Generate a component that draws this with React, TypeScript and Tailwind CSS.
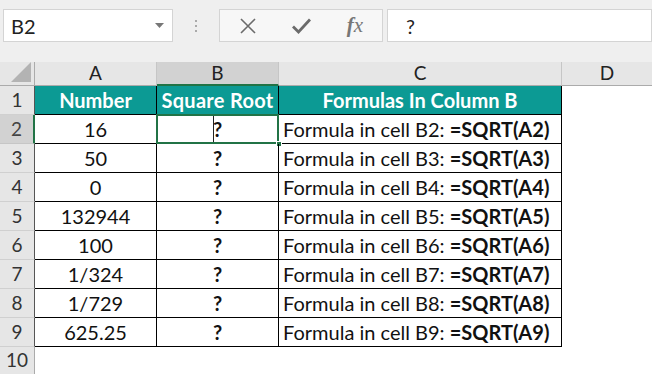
import React from "react";

const rows: [string, string][] = [
  ["16", "B2"],
  ["50", "B3"],
  ["0", "B4"],
  ["132944", "B5"],
  ["100", "B6"],
  ["1/324", "B7"],
  ["1/729", "B8"],
  ["625.25", "B9"],
];

const font = { fontFamily: "Lato, 'Open Sans', sans-serif" };

export default function App() {
  return (
    <div className="w-[652px] h-[374px] overflow-hidden bg-white text-[#1a1a1a]" style={font}>
      {/* Toolbar */}
      <div className="h-[62px] bg-[#efefef] flex items-start pt-[9px]">
        <div className="ml-[3px] w-[170px] h-[33px] bg-white border border-[#d4d4d4] flex items-center justify-between pl-[7px] pr-[8px]">
          <span className="text-[20px] text-[#222]">B2</span>
          <svg width="9" height="5" viewBox="0 0 9 5">
            <path d="M0 0 L9 0 L4.5 5 Z" fill="#777" />
          </svg>
        </div>
        <div className="w-[46px] h-[33px] flex flex-col items-center justify-center gap-[3px]">
          <div className="w-[2px] h-[2px] bg-[#aaa]" />
          <div className="w-[2px] h-[2px] bg-[#aaa]" />
          <div className="w-[2px] h-[2px] bg-[#aaa]" />
        </div>
        <div className="w-[164px] h-[33px] bg-[#f7f7f7] border border-[#d4d4d4] flex items-center">
          <div className="w-[54px] flex justify-center pl-[2px]">
            <svg width="16" height="16" viewBox="0 0 16 16">
              <path d="M1 1 L15 15 M15 1 L1 15" stroke="#6b6b6b" strokeWidth="1.6" />
            </svg>
          </div>
          <div className="w-[54px] flex justify-center">
            <svg width="19" height="16" viewBox="0 0 19 16">
              <path d="M1 8.5 L6.5 14 L18 1.5" stroke="#6b6b6b" strokeWidth="2.8" fill="none" />
            </svg>
          </div>
          <div className="w-[54px] flex justify-center">
            <span className="text-[21px] italic text-[#777]" style={{ fontFamily: "'Liberation Serif', serif" }}>
              <b className="font-bold">f</b>x
            </span>
          </div>
        </div>
        <div className="ml-[4px] flex-1 h-[33px] bg-white border border-[#d4d4d4] flex items-center pl-[18px]">
          <span className="text-[20px] text-[#222]">?</span>
        </div>
      </div>

      {/* Grid */}
      <div className="grid grid-cols-[35px_122px_122px_283px_90px] grid-rows-[24px_repeat(9,29px)_27px]">
        {/* column headers */}
        <div className="bg-[#e6e6e6] border-r border-b border-[#ababab] relative">
          <svg className="absolute right-[3px] bottom-[3px]" width="20" height="20" viewBox="0 0 20 20">
            <path d="M20 0 L20 20 L0 20 Z" fill="#b3b3b3" />
          </svg>
        </div>
        <div className="bg-[#e6e6e6] border-r border-b border-[#c6c6c6] border-b-[#ababab] flex items-center justify-center text-[19px] text-[#222]">A</div>
        <div className="bg-[#d2d2d2] border-r border-[#c6c6c6] border-b-2 border-b-[#217346] flex items-center justify-center text-[19px] text-[#222]">B</div>
        <div className="bg-[#e6e6e6] border-r border-b border-[#c6c6c6] border-b-[#ababab] flex items-center justify-center text-[19px] text-[#222]">C</div>
        <div className="bg-[#e6e6e6] border-b border-[#ababab] flex items-center justify-center text-[19px] text-[#222]">D</div>

        {/* row 1 */}
        <div className="bg-[#e6e6e6] border-r border-b border-r-[#555] border-b-[#d0d0d0] flex items-center justify-center text-[19px] text-[#333]">1</div>
        <div className="bg-[#0c9a94] border-r border-b border-black flex items-center justify-center text-[20px] font-bold text-white">Number</div>
        <div className="bg-[#0c9a94] border-r border-b border-black flex items-center justify-center text-[20px] font-bold text-white tracking-[0.3px]">Square Root</div>
        <div className="bg-[#0c9a94] border-r border-b border-black flex items-center justify-center text-[20px] font-bold text-white">Formulas In Column B</div>
        <div className="bg-white" />

        {rows.map(([a, ref], i) => {
          const n = i + 2;
          const sel = n === 2;
          return (
            <React.Fragment key={ref}>
              <div
                className={
                  sel
                    ? "bg-[#d2d2d2] border-r-2 border-b border-r-[#217346] border-b-[#c6c6c6] flex items-center justify-center text-[19px] text-[#444]"
                    : "bg-[#e6e6e6] border-r border-b border-r-[#555] border-b-[#d0d0d0] flex items-center justify-center text-[19px] text-[#333]"
                }
              >
                {n}
              </div>
              <div className="border-r border-b border-black flex items-center justify-center text-[20px] text-[#111]">{a}</div>
              <div className="relative border-r border-b border-black flex items-center justify-center text-[20px] font-bold text-[#111]">
                ?
                {sel && (
                  <>
                    <div className="absolute left-[56px] top-0 bottom-0 w-px bg-[#222]" />
                    <div className="absolute -left-[1px] -top-[1px] -right-[1px] -bottom-[1px] border-2 border-[#217346]" />
                    <div className="absolute -right-[4px] -bottom-[4px] w-[6px] h-[6px] bg-[#217346] border border-white" />
                  </>
                )}
              </div>
              <div className="border-r border-b border-black flex items-center pl-[4px] text-[20px] text-[#111] whitespace-nowrap">
                Formula in cell {ref}:&nbsp;<b className="font-bold">=SQRT(A{n})</b>
              </div>
              <div className="bg-white" />
            </React.Fragment>
          );
        })}

        {/* row 10 */}
        <div className="bg-[#e6e6e6] border-r border-[#ababab] flex items-center justify-center text-[19px] text-[#333]">10</div>
        <div />
        <div />
        <div />
        <div />
      </div>
    </div>
  );
}
